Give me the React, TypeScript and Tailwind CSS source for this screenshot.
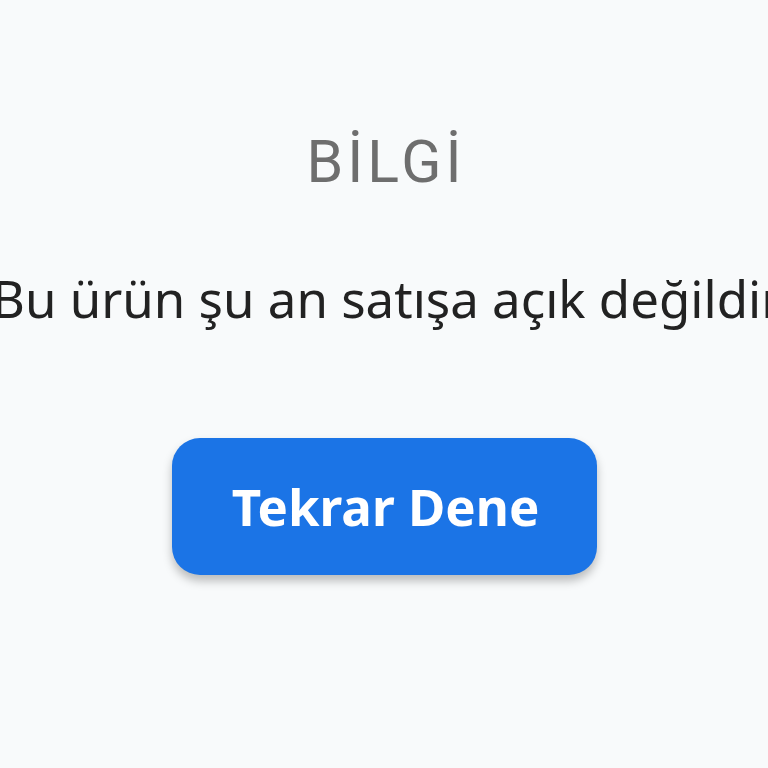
export default function App() {
  return (
    <div className="h-screen w-full overflow-hidden bg-[#f8fafb] flex flex-col items-center pt-[128px]">
      <h1 className="font-['Roboto',sans-serif] text-[59px] leading-[68px] text-[#6e6e6e] tracking-[4px] pl-[4px]">
        BİLGİ
      </h1>
      <div className="w-full flex justify-center mt-[70px]">
        <p className="whitespace-nowrap font-['Noto_Sans',sans-serif] text-[51px] leading-[64px] text-[#222222] pl-[6px]">
          Bu ürün şu an satışa açık değildir
        </p>
      </div>
      <button className="mt-[108px] w-[425px] h-[137px] rounded-[28px] bg-[#1b74e6] shadow-[0_6px_10px_rgba(0,0,0,0.25)] flex items-center justify-center">
        <span className="font-['Noto_Sans',sans-serif] font-bold text-[51px] text-white pl-[3px]">
          Tekrar Dene
        </span>
      </button>
    </div>
  );
}
